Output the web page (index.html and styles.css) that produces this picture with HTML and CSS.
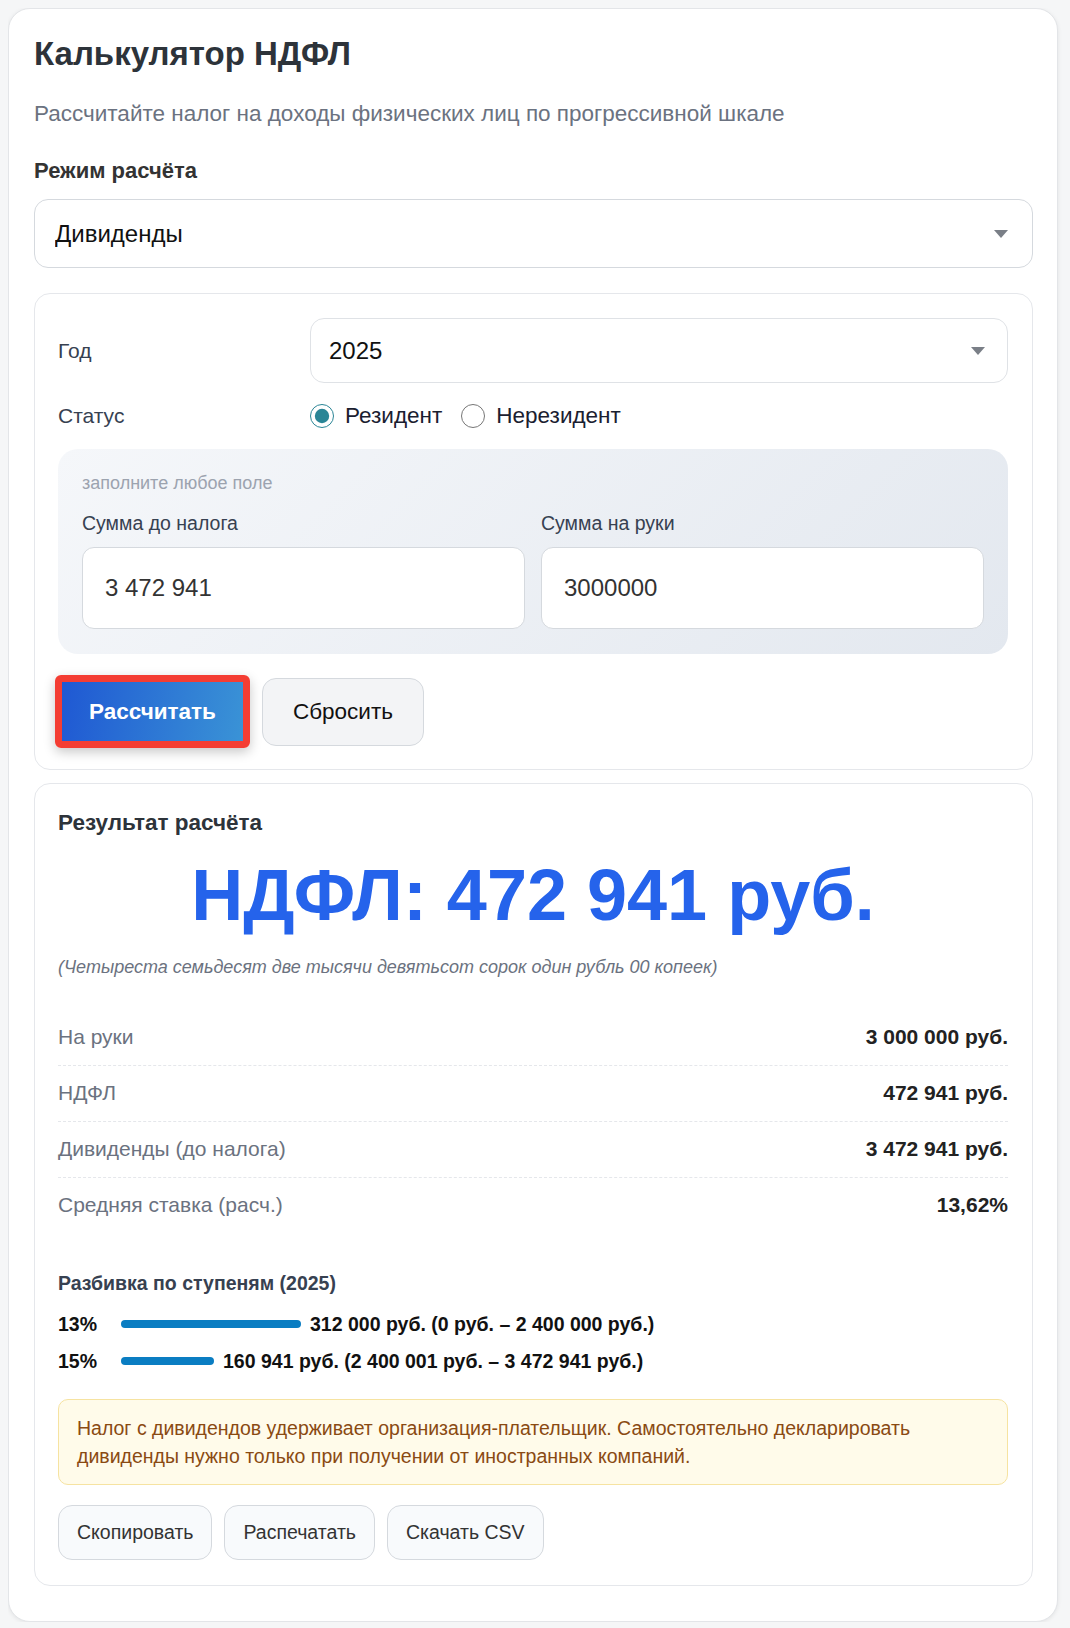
FILE: index.html
```html
<!DOCTYPE html>
<html lang="ru">
<head>
    <meta charset="UTF-8">
    <meta name="viewport" content="width=device-width, initial-scale=1.0">
    <title>Калькулятор НДФЛ</title>
    <link rel="stylesheet" href="styles.css">
</head>
<body>
    <div class="calc">
        <h1 class="calc-title">Калькулятор НДФЛ</h1>
        <p class="calc-sub">Рассчитайте налог на доходы физических лиц по прогрессивной шкале</p>

        <label class="mode-label" for="mode">Режим расчёта</label>
        <div class="select-wrap">
            <select id="mode" class="select select-mode">
                <option>Дивиденды</option>
            </select>
            <svg class="caret" width="14" height="8" viewBox="0 0 14 8"><path d="M0 0h14L7 8z"/></svg>
        </div>

        <!-- input form -->
        <div class="card form-card">
            <div class="field-row">
                <span class="row-label">Год</span>
                <div class="select-wrap">
                    <select class="select select-year">
                        <option>2025</option>
                    </select>
                    <svg class="caret caret-year" width="14" height="8" viewBox="0 0 14 8"><path d="M0 0h14L7 8z"/></svg>
                </div>
            </div>
            <div class="field-row status-row">
                <span class="row-label">Статус</span>
                <div class="radios">
                    <label class="radio"><input type="radio" name="status" checked> Резидент</label>
                    <label class="radio"><input type="radio" name="status"> Нерезидент</label>
                </div>
            </div>

            <div class="amounts">
                <div class="hint">заполните любое поле</div>
                <div class="amount-grid">
                    <div class="amount">
                        <label for="gross">Сумма до налога</label>
                        <input type="text" id="gross" value="3 472 941">
                    </div>
                    <div class="amount">
                        <label for="net">Сумма на руки</label>
                        <input type="text" id="net" value="3000000">
                    </div>
                </div>
            </div>

            <div class="actions">
                <button type="button" class="btn-calc">Рассчитать</button>
                <button type="button" class="btn-reset">Сбросить</button>
            </div>
        </div>

        <!-- result -->
        <div class="card result-card">
            <h2 class="result-title">Результат расчёта</h2>
            <div class="result-big">НДФЛ: 472 941 руб.</div>
            <div class="result-words">(Четыреста семьдесят две тысячи девятьсот сорок один рубль 00 копеек)</div>

            <div class="rows">
                <div class="row"><span>На руки</span><b>3 000 000 руб.</b></div>
                <div class="row"><span>НДФЛ</span><b>472 941 руб.</b></div>
                <div class="row"><span>Дивиденды (до налога)</span><b>3 472 941 руб.</b></div>
                <div class="row"><span>Средняя ставка (расч.)</span><b>13,62%</b></div>
            </div>

            <h3 class="tiers-title">Разбивка по ступеням (2025)</h3>
            <div class="tier">
                <span class="tier-pct">13%</span>
                <span class="tier-bar" style="width: 180px"></span>
                <span class="tier-text">312 000 руб. (0 руб. – 2 400 000 руб.)</span>
            </div>
            <div class="tier">
                <span class="tier-pct">15%</span>
                <span class="tier-bar" style="width: 93px"></span>
                <span class="tier-text">160 941 руб. (2 400 001 руб. – 3 472 941 руб.)</span>
            </div>

            <div class="note">Налог с дивидендов удерживает организация-плательщик. Самостоятельно декларировать дивиденды нужно только при получении от иностранных компаний.</div>

            <div class="tools">
                <button type="button" class="btn-tool">Скопировать</button>
                <button type="button" class="btn-tool">Распечатать</button>
                <button type="button" class="btn-tool">Скачать CSV</button>
            </div>
        </div>
    </div>
</body>
</html>
```

FILE: styles.css
```css
body {
    margin: 8px;
    background: #f5f6f7;
    font-family: "Liberation Sans", Arial, sans-serif;
    color: #222;
}

.calc {
    max-width: 1050px;
    box-sizing: border-box;
    background: #fff;
    border: 1px solid #e3e5e8;
    border-radius: 22px;
    padding: 26px 24px 35px 25px;
    box-shadow: 0 1px 4px rgba(0, 0, 0, 0.08);
}

.calc-title {
    margin: 0 0 28px;
    font-size: 33px;
    line-height: 38px;
    font-weight: bold;
    color: #2d333a;
}

.calc-sub {
    margin: 0 0 31px;
    font-size: 22.5px;
    line-height: 26px;
    color: #6b7280;
}

.mode-label {
    display: block;
    margin-bottom: 15px;
    font-size: 22px;
    line-height: 26px;
    font-weight: bold;
    color: #333;
}

.select-wrap {
    position: relative;
}

.select {
    display: block;
    width: 100%;
    box-sizing: border-box;
    appearance: none;
    -webkit-appearance: none;
    background: #fff;
    border: 1px solid #d5d9de;
    border-radius: 14px;
    font-family: inherit;
    font-size: 24px;
    color: #111;
    outline: none;
}

.select-mode {
    height: 69px;
    padding: 0 20px;
}

.select-year {
    height: 65px;
    padding: 0 18px;
    border-color: #dfe2e6;
}

.caret {
    position: absolute;
    right: 25px;
    top: 50%;
    margin-top: -4px;
    fill: #7a7f87;
}

.caret-year {
    right: 23px;
}

.card {
    background: #fff;
    border: 1px solid #e5e7eb;
    border-radius: 16px;
    padding: 24px 24px 24px 23px;
}

.form-card {
    margin-top: 25px;
    padding-bottom: 21px;
}

.field-row {
    display: grid;
    grid-template-columns: 252px 1fr;
    align-items: center;
    margin-bottom: 20px;
}

.row-label {
    font-size: 21px;
    color: #374151;
}

.status-row {
    min-height: 26px;
}

.radios {
    display: flex;
    align-items: center;
    gap: 19px;
}

.radio {
    display: flex;
    align-items: center;
    gap: 11px;
    font-size: 22.5px;
    color: #1a2030;
}

.radio input {
    width: 24px;
    height: 24px;
    margin: 0;
    accent-color: #2a8596;
}

.amounts {
    background: linear-gradient(135deg, #f5f7fa 0%, #e3e8ef 100%);
    border-radius: 20px;
    padding: 24px 24px 25px;
}

.hint {
    margin-bottom: 17px;
    font-size: 18px;
    line-height: 21px;
    color: #9ca3af;
}

.amount-grid {
    display: grid;
    grid-template-columns: 1fr 1fr;
    gap: 16px;
}

.amount label {
    display: block;
    margin-bottom: 12px;
    font-size: 19.5px;
    line-height: 24px;
    color: #374151;
}

.amount input {
    display: block;
    width: 100%;
    height: 82px;
    box-sizing: border-box;
    padding: 0 22px;
    border: 1px solid #d5d9de;
    border-radius: 12px;
    background: #fff;
    font-family: inherit;
    font-size: 24px;
    color: #333;
}

.actions {
    display: flex;
    align-items: center;
    gap: 12px;
    margin-top: 21px;
}

.btn-calc {
    height: 73px;
    margin-left: -3px;
    padding: 0 27px;
    border: 7px solid #f43d33;
    border-radius: 6px;
    background: linear-gradient(100deg, #1f58d3 0%, #3a93d6 100%);
    color: #fff;
    font-family: inherit;
    font-size: 22.5px;
    font-weight: bold;
    box-shadow: 0 4px 12px rgba(0, 0, 0, 0.22);
    cursor: pointer;
}

.btn-reset {
    height: 68px;
    padding: 0 30px;
    border: 1px solid #d5d9de;
    border-radius: 14px;
    background: #f3f4f6;
    color: #111;
    font-family: inherit;
    font-size: 22.5px;
    cursor: pointer;
}

.result-card {
    margin-top: 13px;
    padding-bottom: 25px;
}

.result-title {
    margin: 0;
    font-size: 22.5px;
    line-height: 30px;
    font-weight: bold;
    color: #2d333a;
}

.result-big {
    margin-top: 14px;
    text-align: center;
    font-size: 72px;
    line-height: 86px;
    font-weight: bold;
    color: #2563eb;
}

.result-words {
    margin-top: 19px;
    font-size: 18px;
    line-height: 21px;
    font-style: italic;
    color: #6b7280;
}

.rows {
    margin-top: 32px;
}

.row {
    display: flex;
    justify-content: space-between;
    padding: 15px 0 16px;
    font-size: 21px;
    line-height: 24px;
    border-bottom: 1px dashed #e5e7eb;
}

.row:last-child {
    border-bottom: none;
}

.row span {
    color: #6b7280;
}

.row b {
    color: #222;
}

.tiers-title {
    margin: 38px 0 17px;
    font-size: 19.5px;
    line-height: 24px;
    font-weight: bold;
    color: #374151;
}

.tier {
    display: flex;
    align-items: center;
    margin-bottom: 13px;
    font-size: 19.5px;
    line-height: 24px;
    font-weight: bold;
    color: #111;
}

.tier-pct {
    width: 63px;
}

.tier-bar {
    height: 8px;
    border-radius: 4px;
    background: #0a7dc2;
    margin-right: 9px;
}

.note {
    margin-top: 26px;
    padding: 14px 18px;
    background: #fffbea;
    border: 1px solid #f6e3a1;
    border-radius: 10px;
    font-size: 19.5px;
    line-height: 28px;
    color: #8a4a12;
}

.tools {
    display: flex;
    gap: 12px;
    margin-top: 20px;
}

.btn-tool {
    height: 55px;
    padding: 0 18px;
    border: 1px solid #d5d9de;
    border-radius: 14px;
    background: #f8fafc;
    color: #333;
    font-family: inherit;
    font-size: 19.5px;
    cursor: pointer;
}
```
